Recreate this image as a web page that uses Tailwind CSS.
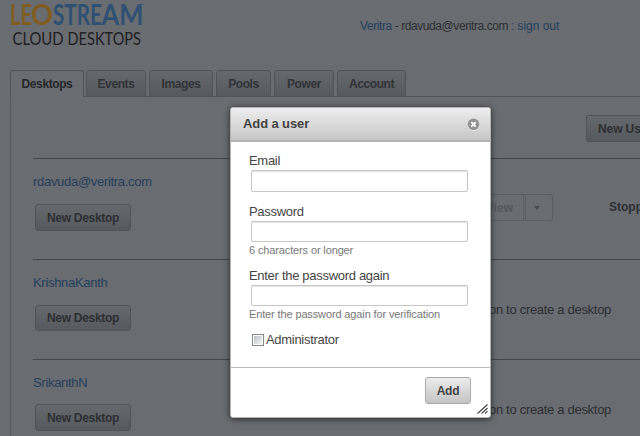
<!DOCTYPE html>
<html lang="en">
<head>
<meta charset="utf-8">
<title>Leostream Cloud Desktops</title>
<script src="https://cdn.jsdelivr.net/npm/@tailwindcss/browser@4"></script>
</head>
<body class="relative h-[436px] w-[640px] overflow-hidden bg-[#696c70] font-['Liberation_Sans',Arial,sans-serif] text-[13px] leading-4 tracking-[-0.3px] text-[#2c2f33]">
<div class="flex h-[436px] w-[640px] flex-col">
  <header class="flex h-[70px] shrink-0 justify-between pr-[80px] pl-[10px]">
    <svg class="h-[50px] w-[140px] font-['Lato',sans-serif] tracking-normal" viewBox="0 0 140 50">
      <g font-size="28" font-weight="700">
        <text x="0" y="25" fill="#805d22" textLength="22" lengthAdjust="spacingAndGlyphs">LE</text>
        <text x="21" y="25" fill="#805d22" textLength="22" lengthAdjust="spacingAndGlyphs">O</text>
        <text x="43" y="25" fill="#2f5072" textLength="49" lengthAdjust="spacingAndGlyphs">STRE</text>
        <text x="91.5" y="25" fill="#2f5072" textLength="42" lengthAdjust="spacingAndGlyphs">AM</text>
      </g>
      <text x="131" y="7" font-size="4" fill="#2f5072">™</text>
      <text x="2.5" y="45" font-size="17.5" fill="#1e2024" textLength="51" lengthAdjust="spacingAndGlyphs">CLOUD</text>
      <text x="57.5" y="45" font-size="17.5" fill="#1e2024" textLength="73.5" lengthAdjust="spacingAndGlyphs">DESKTOPS</text>
    </svg>
    <div class="w-[200px] pt-[18px] text-[12px] tracking-[-0.42px] whitespace-nowrap"><span class="text-[#263f5c]">Veritra</span> - rdavuda@veritra.com <span class="tracking-[-0.05px] text-[#263f5c]">: sign out</span></div>
  </header>
  <nav class="flex h-[27px] shrink-0 text-[12px] leading-[26px] font-bold tracking-[-0.4px]">
    <div class="w-[10px] shrink-0"></div>
    <div class="w-[74px] rounded-t-[3px] border border-b-0 border-[#505357] text-center text-[#24272b]">Desktops</div>
    <div class="w-[2px] border-b border-[#505357]"></div>
    <div class="w-[60px] rounded-t-[3px] border border-[#505357] bg-linear-to-b from-[#65686c] to-[#56595d] text-center text-[#303338]">Events</div>
    <div class="w-[3px] border-b border-[#505357]"></div>
    <div class="w-[64px] rounded-t-[3px] border border-[#505357] bg-linear-to-b from-[#65686c] to-[#56595d] text-center text-[#303338]">Images</div>
    <div class="w-[3px] border-b border-[#505357]"></div>
    <div class="w-[55px] rounded-t-[3px] border border-[#505357] bg-linear-to-b from-[#65686c] to-[#56595d] text-center text-[#303338]">Pools</div>
    <div class="w-[3px] border-b border-[#505357]"></div>
    <div class="w-[60px] rounded-t-[3px] border border-[#505357] bg-linear-to-b from-[#65686c] to-[#56595d] text-center text-[#303338]">Power</div>
    <div class="w-[3px] border-b border-[#505357]"></div>
    <div class="w-[69px] rounded-t-[3px] border border-[#505357] bg-linear-to-b from-[#65686c] to-[#56595d] text-center text-[#303338]">Account</div>
    <div class="flex-1 border-b border-[#505357]"></div>
  </nav>
  <main class="ml-[10px] flex-1 overflow-hidden border-l border-[#56595d] pl-[22px]">
    <div class="flex h-[61px] justify-end pt-[18px]">
      <div class="h-[27px] w-[54px] overflow-hidden rounded-l-[3px] border border-r-0 border-[#505357] bg-linear-to-b from-[#65686c] to-[#56595d] pl-[11px] text-[12px] leading-[26px] font-bold tracking-[-0.1px] whitespace-nowrap">New User</div>
    </div>
    <section class="flex h-[101px] justify-between border-t border-[#42454a]">
      <div class="pt-[15px]">
        <a class="block text-[#263f5c]">rdavuda@veritra.com</a>
        <div class="mt-[14px] ml-[2px] h-[27px] w-[96px] rounded-[3px] border border-[#505357] bg-linear-to-b from-[#65686c] to-[#56595d] text-center text-[12px] leading-[26px] font-bold">New Desktop</div>
      </div>
      <div class="flex pt-[35px] text-[12px] leading-[26px] font-bold tracking-normal">
        <div class="h-[27px] w-[42px] border border-r-0 border-[#5b5e62] pl-[4px] text-[#55585c]">View</div>
        <div class="h-[27px] w-[3px] border border-[#5b5e62]"></div>
        <div class="flex h-[27px] w-[27px] items-center justify-center rounded-r-[3px] border border-l-0 border-[#5b5e62] pr-[4px]"><div class="h-0 w-0 border-x-[3px] border-t-[4px] border-x-transparent border-t-[#484b4f]"></div></div>
        <div class="ml-[56px] w-[31px] overflow-hidden whitespace-nowrap">Stopped</div>
      </div>
    </section>
    <section class="flex h-[100px] justify-between border-t border-[#42454a]">
      <div class="pt-[15px]">
        <a class="block text-[#263f5c]">KrishnaKanth</a>
        <div class="mt-[14px] ml-[2px] h-[26px] w-[96px] rounded-[3px] border border-[#505357] bg-linear-to-b from-[#65686c] to-[#56595d] text-center text-[12px] leading-[25px] font-bold">New Desktop</div>
      </div>
      <div class="pt-[42px] pr-[29px]">button to create a desktop</div>
    </section>
    <section class="flex h-[100px] justify-between border-t border-[#42454a]">
      <div class="pt-[15px]">
        <a class="block text-[#263f5c]">SrikanthN</a>
        <div class="mt-[13px] ml-[2px] h-[27px] w-[96px] rounded-[3px] border border-[#505357] bg-linear-to-b from-[#65686c] to-[#56595d] text-center text-[12px] leading-[26px] font-bold">New Desktop</div>
      </div>
      <div class="pt-[42px] pr-[29px]">button to create a desktop</div>
    </section>
  </main>
</div>

<!-- Modal dialog -->
<div class="absolute top-[107px] left-[230px] flex h-[311px] w-[261px] flex-col rounded-[3px] border border-[#b5b5b5] bg-white text-[#444] shadow-[0_1px_6px_0px_rgba(0,0,0,0.65)]">
  <div class="flex h-[34px] shrink-0 items-center justify-between rounded-t-[2px] border-b-2 border-[#b3b3b3] bg-linear-to-b from-[#eee] to-[#c6c6c6] pr-[10px] pl-[12px]">
    <div class="text-[13px] font-bold tracking-[-0.1px]">Add a user</div>
    <svg class="h-[13px] w-[13px]" viewBox="0 0 13 13"><circle cx="6.5" cy="7" r="6" fill="#eee"/><circle cx="6.5" cy="6.3" r="5.8" fill="#929292"/><path d="M4.3 4.2l4.4 4.4M8.7 4.2L4.3 8.6" stroke="#fff" stroke-width="1.8"/></svg>
  </div>
  <div class="flex h-[226px] shrink-0 flex-col border-b border-[#bbb] pl-[18px] whitespace-nowrap">
    <div class="mt-[11px] h-4">Email</div>
    <div class="mt-[1px] ml-[2px] h-[22px] w-[217px] rounded-[2px] border border-[#c6c6c6] shadow-[inset_0_1px_1px_#e4e4e4]"></div>
    <div class="mt-[12px] h-4">Password</div>
    <div class="mt-[1px] ml-[2px] h-[21px] w-[217px] rounded-[2px] border border-[#c6c6c6] shadow-[inset_0_1px_1px_#e4e4e4]"></div>
    <div class="h-[17px] text-[11px] tracking-[-0.13px] text-[#777]">6 characters or longer</div>
    <div class="mt-[9px] h-4">Enter the password again</div>
    <div class="mt-[1px] ml-[2px] h-[21px] w-[217px] rounded-[2px] border border-[#c6c6c6] shadow-[inset_0_1px_1px_#e4e4e4]"></div>
    <div class="h-[17px] text-[11px] tracking-[-0.13px] text-[#777]">Enter the password again for verification</div>
    <div class="mt-[9px] flex h-4">
      <div class="mt-[2px] mr-[2px] ml-[3px] h-[12px] w-[12px] border border-[#85888b] bg-white p-px"><div class="h-full w-full bg-linear-to-br from-[#b9bfc5] to-[#f6f6f6]"></div></div>
      <span class="tracking-[-0.3px]">Administrator</span>
    </div>
  </div>
  <div class="flex flex-1 justify-end pt-[9px] pr-[19px]">
    <div class="h-[27px] w-[46px] rounded-[3px] border border-[#aaa] bg-linear-to-b from-[#ececec] to-[#c4c4c4] text-center text-[12px] leading-[27px] font-bold tracking-[-0.2px]">Add</div>
  </div>
  <svg class="absolute right-[2px] bottom-[3px] h-[10px] w-[11px]" viewBox="0 0 11 10" stroke="#444" stroke-width="1.1"><path d="M.5 9.5L10.5.5M4.5 9.5L10.5 4M8 9.5L10.5 7.2"/></svg>
</div>
</body>
</html>
